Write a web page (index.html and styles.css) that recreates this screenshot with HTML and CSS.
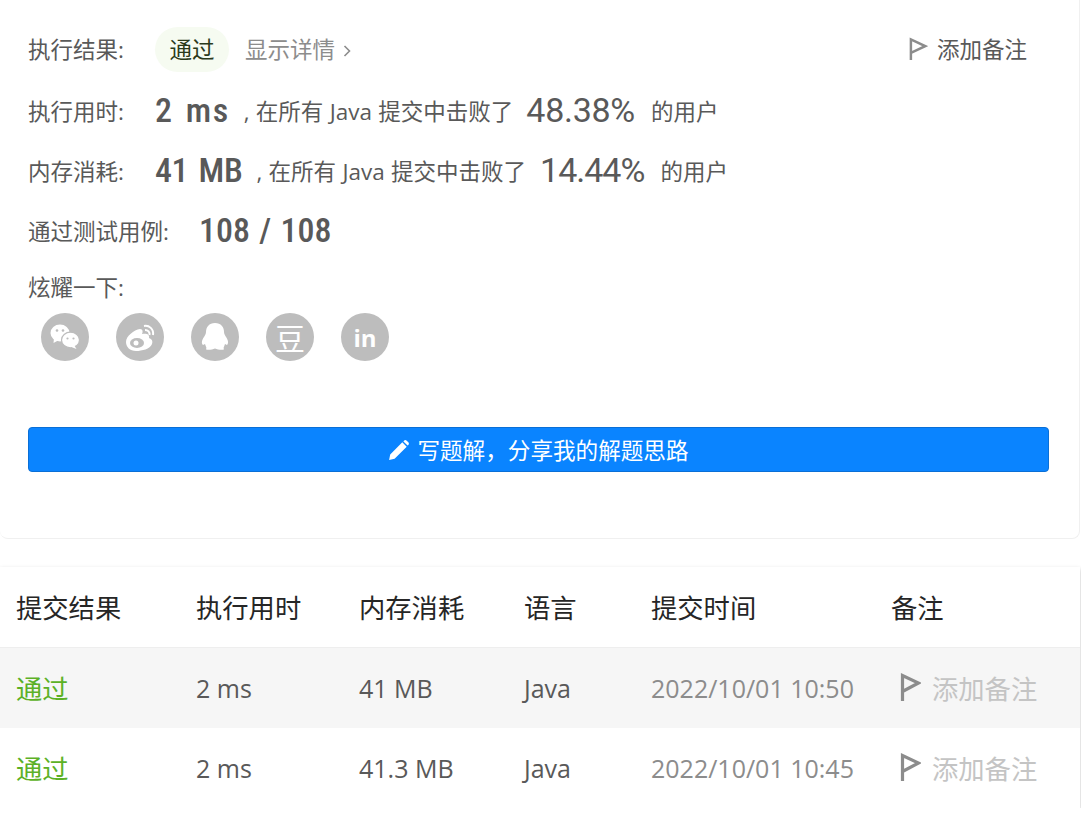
FILE: index.html
```html
<!DOCTYPE html>
<html lang="zh-CN">
<head>
  <meta charset="UTF-8" />
  <title>提交记录</title>
  <link rel="stylesheet" href="styles.css">
</head>
<body>
  <div class="result-card">
    <div class="row row-top">
      <span class="label">执行结果:</span>
      <span class="pill">通过</span>
      <a class="details">显示详情
        <svg class="chevron" viewBox="0 0 8 14" width="8" height="14"><path d="M1.5 2 L6.5 7 L1.5 12" fill="none" stroke="#8c8c8c" stroke-width="1.6"/></svg>
      </a>
      <a class="add-note">
        <svg class="flag" viewBox="0 0 20 24" width="19" height="23"><path d="M2 24 V2.500 L17 9.500 L2 16.500" fill="none" stroke="#8c8c8c" stroke-width="2.600"/></svg>
        添加备注
      </a>
    </div>
    <div class="row">
      <span class="label">执行用时:</span>
      <span class="big time-value">2 ms</span>
      <span class="text first">, 在所有 Java 提交中击败了</span>
      <span class="big pct">48.38%</span>
      <span class="text">的用户</span>
    </div>
    <div class="row">
      <span class="label">内存消耗:</span>
      <span class="big mem-value">41 MB</span>
      <span class="text first">, 在所有 Java 提交中击败了</span>
      <span class="big pct pct-ones">14.44%</span>
      <span class="text">的用户</span>
    </div>
    <div class="row">
      <span class="label wide">通过测试用例:</span>
      <span class="big cases">108 / 108</span>
    </div>
    <div class="share-title">炫耀一下:</div>
    <div class="shares">
      <span class="share">
        <svg viewBox="0 0 48 48" width="48" height="48">
          <ellipse cx="19" cy="20" rx="9.500" ry="8.500" fill="#fff"/>
          <path d="M13 25 L12.500 30 L18 27 Z" fill="#fff"/>
          <ellipse cx="29.500" cy="27" rx="9" ry="7.800" fill="#fff" stroke="#bdbdbd" stroke-width="1.200"/>
          <path d="M33 32 L35.500 36 L29 33.500 Z" fill="#fff"/>
          <circle cx="16" cy="17.500" r="1.300" fill="#bdbdbd"/><circle cx="22" cy="17.500" r="1.300" fill="#bdbdbd"/>
          <circle cx="26.500" cy="25.500" r="1.100" fill="#bdbdbd"/><circle cx="32.500" cy="25.500" r="1.100" fill="#bdbdbd"/>
        </svg>
      </span>
      <span class="share">
        <svg viewBox="0 0 48 48" width="48" height="48">
          <path d="M10 29 C10 23 18 17 24 16 C27 16 27 19 26 21 C30 20 34 21 33 25 C36 26 37 28 36 31 C34 36 26 38 20 38 C14 38 10 34 10 29 Z" fill="#fff"/>
          <ellipse cx="21" cy="30" rx="7" ry="5" fill="#bdbdbd"/>
          <circle cx="20" cy="30" r="2.500" fill="#fff"/>
          <path d="M28 13 C33 12 38 16 37 22 M29 17 C32 17 34 19 33.500 22" fill="none" stroke="#fff" stroke-width="2"/>
        </svg>
      </span>
      <span class="share">
        <svg viewBox="0 0 48 48" width="48" height="48">
          <path d="M24 10 C30 10 33 14 33 19 C33 21 34 22 35 24 C37 27 38 30 36 32 L34 31 C33 34 32 35 33 36 C33 37 30 37 27 36.500 L24 35.500 L21 36.500 C18 37 15 37 15 36 C16 35 15 34 14 31 L12 32 C10 30 11 27 13 24 C14 22 15 21 15 19 C15 14 18 10 24 10 Z" fill="#fff"/>
        </svg>
      </span>
      <span class="share glyph">豆</span>
      <span class="share glyph latin">in</span>
    </div>
    <button class="solution-btn">
      <svg viewBox="0 0 20 20" width="22" height="22"><path d="M1 19 L2 14 L13 3 L17 7 L6 18 Z M14.500 1.500 C15.300 .8 16.200 .8 17 1.500 L18.500 3 C19.200 3.800 19.200 4.700 18.500 5.500 L17.800 6 L14 2.200 Z" fill="#fff"/></svg>
      写题解，分享我的解题思路
    </button>
  </div>

  <div class="submissions">
    <div class="tr head">
      <span>提交结果</span><span>执行用时</span><span>内存消耗</span><span>语言</span><span>提交时间</span><span>备注</span>
    </div>
    <div class="tr odd">
      <span class="ok">通过</span><span>2 ms</span><span>41 MB</span><span>Java</span><span class="time">2022/10/01 10:50</span>
      <span class="note">
        <svg class="flag" viewBox="0 0 20 28" width="21" height="28"><path d="M2 28 V2.500 L18 10 L2 18.500" fill="none" stroke="#8c8c8c" stroke-width="3.200"/></svg>
        添加备注
      </span>
    </div>
    <div class="tr">
      <span class="ok">通过</span><span>2 ms</span><span>41.3 MB</span><span>Java</span><span class="time">2022/10/01 10:45</span>
      <span class="note">
        <svg class="flag" viewBox="0 0 20 28" width="21" height="28"><path d="M2 28 V2.500 L18 10 L2 18.500" fill="none" stroke="#8c8c8c" stroke-width="3.200"/></svg>
        添加备注
      </span>
    </div>
  </div>
</body>
</html>
```

FILE: styles.css
```css
body {
  margin: 0;
  background: #fff;
  color: #595959;
  font-family: "Open Sans", "Noto Sans CJK SC", sans-serif;
}

.result-card {
  width: 1080px;
  box-sizing: border-box;
  padding: 20px 30px 66px 28px;
  border: 1px solid #f0f0f0;
  border-top: none;
  border-left: none;
  border-radius: 0 0 8px 8px;
}

.row {
  display: flex;
  align-items: center;
  height: 60px;
  font-size: 22.5px;
}
.row-top {
  height: 56px;
  margin-bottom: 4px;
}
.label {
  width: 127px;
  flex-shrink: 0;
}
.label.wide {
  width: 171px;
}

.pill {
  width: 74px;
  height: 45px;
  line-height: 45px;
  margin-top: 2px;
  text-align: center;
  border-radius: 23px;
  background: #f6fbf1;
  color: #2b3a1b;
}
.details {
  margin-left: 16px;
  color: #8c8c8c;
}
.chevron {
  margin-left: 2px;
}
.add-note {
  margin-left: auto;
  margin-right: 22px;
  display: flex;
  align-items: center;
  gap: 9px;
}

.big {
  font-family: "Roboto", sans-serif;
  font-size: 34px;
  font-weight: 500;
  font-stretch: 80%;
  word-spacing: 3px;
}
.time-value {
  letter-spacing: 1.5px;
}
.mem-value {
  letter-spacing: -.4px;
}
.cases {
  word-spacing: 1.5px;
}
.pct {
  font-weight: 400;
  font-stretch: 90%;
  letter-spacing: -.3px;
  margin: 0 16px 0 13px;
}
.pct-ones {
  letter-spacing: -1px;
  margin-left: 14px;
}
.text {
  word-spacing: .5px;
}
.text.first {
  margin-left: 14px;
}

.share-title {
  font-size: 22.5px;
  line-height: 30px;
  margin-top: 13px;
}
.shares {
  display: flex;
  gap: 27px;
  margin: 10px 0 66px 13px;
}
.share {
  width: 48px;
  height: 48px;
  border-radius: 50%;
  background: #bdbdbd;
  color: #fff;
  display: flex;
  align-items: center;
  justify-content: center;
}
.glyph {
  font-size: 30px;
}
.latin {
  font-family: "Open Sans", sans-serif;
  font-size: 24px;
  font-weight: 700;
}

.solution-btn {
  width: 100%;
  height: 45px;
  display: flex;
  align-items: center;
  justify-content: center;
  gap: 7px;
  background: #0a84ff;
  border: 1px solid #0a6fd6;
  border-radius: 4px;
  color: #fff;
  font-family: inherit;
  font-size: 22.6px;
}

.submissions {
  margin-top: 28px;
  width: 1080px;
  box-shadow: 0 2px 4px rgba(0, 0, 0, .25);
  font-size: 25px;
}
.tr {
  display: grid;
  grid-template-columns: 180px 163px 165px 127px 240px 1fr;
  height: 80px;
  align-items: center;
  padding-left: 16px;
  background: #fff;
}
.tr.head {
  font-size: 26.3px;
  color: #262626;
  border-bottom: 1px solid #eee;
}
.tr.head span {
  margin-bottom: 2px;
}
.tr.odd {
  background: #f6f6f6;
}
.ok {
  color: #5cb126;
  font-size: 26.3px;
  margin-bottom: 2px;
}
.time {
  color: #8c8c8c;
}
.note {
  display: flex;
  align-items: center;
  gap: 11px;
  margin-left: 9px;
  margin-bottom: 2px;
  color: #c4c4c4;
  font-size: 26.3px;
}
```
